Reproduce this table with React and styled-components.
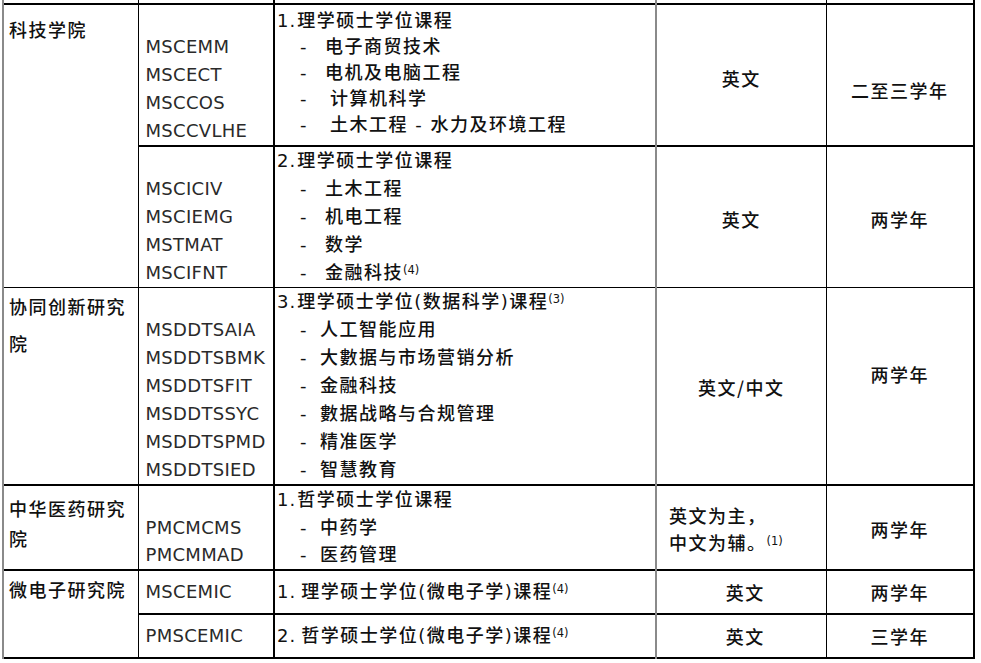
import React from "react";
import styled, { createGlobalStyle } from "styled-components";

const LATIN = `"DejaVu Sans", "Noto Sans CJK SC", sans-serif`;
const CJK = `"Noto Sans CJK SC", "Noto Sans CJK TC", sans-serif`;

const GlobalStyle = createGlobalStyle`
  html, body {
    margin: 0;
    padding: 0;
    background: #fff;
  }
  body {
    font-family: ${CJK};
    color: #111;
  }
`;

const App = () => {
  return (
    <Page>
      <GlobalStyle />
      <Table>
        <colgroup>
          <Col $w={135} />
          <Col $w={136} />
          <Col $w={382} />
          <Col $w={170} />
          <Col $w={148} />
        </colgroup>
        <tbody>
          <StubRow>
            <Stub $gray />
            <Stub />
            <Stub $thick />
            <Stub $gray />
            <Stub $right />
          </StubRow>

          <Row $top={2}>
            <School rowSpan={2} $pt={8} $lh={32}>
              科技学院
            </School>
            <Codes $lh={28}>
              <br />
              MSCEMM
              <br />
              MSCECT
              <br />
              MSCCOS
              <br />
              MSCCVLHE
            </Codes>
            <Course $pt={3} $lh={26}>
              <Title>
                <Num>1.</Num>理学硕士学位课程
              </Title>
              <Item>
                <Dash $w={25}>-</Dash>电子商贸技术
              </Item>
              <Item>
                <Dash $w={25}>-</Dash>电机及电脑工程
              </Item>
              <Item>
                <Dash $w={30}>-</Dash>计算机科学
              </Item>
              <Item>
                <Dash $w={30}>-</Dash>土木工程 - 水力及环境工程
              </Item>
            </Course>
            <Lang $pt={5}>英文</Lang>
            <Years $pt={30}>二至三学年</Years>
          </Row>

          <Row $top={2}>
            <Codes $lh={28}>
              <br />
              MSCICIV
              <br />
              MSCIEMG
              <br />
              MSTMAT
              <br />
              MSCIFNT
            </Codes>
            <Course $lh={28}>
              <Title>
                <Num>2.</Num>理学硕士学位课程
              </Title>
              <Item>
                <Dash $w={25}>-</Dash>土木工程
              </Item>
              <Item>
                <Dash $w={25}>-</Dash>机电工程
              </Item>
              <Item>
                <Dash $w={25}>-</Dash>数学
              </Item>
              <Item>
                <Dash $w={25}>-</Dash>金融科技<Sup>(4)</Sup>
              </Item>
            </Course>
            <Lang $pt={4}>英文</Lang>
            <Years $pt={4}>两学年</Years>
          </Row>

          <Row $top={1}>
            <School $pt={0} $lh={37}>
              协同创新研究院
            </School>
            <Codes $lh={28}>
              <br />
              MSDDTSAIA
              <br />
              MSDDTSBMK
              <br />
              MSDDTSFIT
              <br />
              MSDDTSSYC
              <br />
              MSDDTSPMD
              <br />
              MSDDTSIED
            </Codes>
            <Course $lh={28}>
              <Title>
                <Num>3.</Num>理学硕士学位(数据科学)课程<Sup>(3)</Sup>
              </Title>
              <Item>
                <Dash $w={20}>-</Dash>人工智能应用
              </Item>
              <Item>
                <Dash $w={20}>-</Dash>大數据与市场营销分析
              </Item>
              <Item>
                <Dash $w={20}>-</Dash>金融科技
              </Item>
              <Item>
                <Dash $w={20}>-</Dash>數据战略与合规管理
              </Item>
              <Item>
                <Dash $w={20}>-</Dash>精准医学
              </Item>
              <Item>
                <Dash $w={20}>-</Dash>智慧教育
              </Item>
            </Course>
            <Lang $pt={2}>英文/中文</Lang>
            <Years $pb={24}>两学年</Years>
          </Row>

          <Row $top={2}>
            <School $pt={7} $lh={30}>
              中华医药研究院
            </School>
            <Codes $lh={27.6}>
              <br />
              PMCMCMS
              <br />
              PMCMMAD
            </Codes>
            <Course $lh={27.6}>
              <Title>
                <Num>1.</Num>哲学硕士学位课程
              </Title>
              <Item>
                <Dash $w={20}>-</Dash>中药学
              </Item>
              <Item>
                <Dash $w={20}>-</Dash>医药管理
              </Item>
            </Course>
            <Note>
              英文为主，
              <br />
              中文为辅。<Sup>(1)</Sup>
            </Note>
            <Years $pt={3}>两学年</Years>
          </Row>

          <Row $top={2}>
            <School rowSpan={2} $pt={3} $lh={30}>
              微电子研究院
            </School>
            <Codes $pt={7} $pb={7}>
              MSCEMIC
            </Codes>
            <Course $pt={7} $pb={7}>
              <Title>
                <Num $gap={5}>1.</Num>理学硕士学位(微电子学)课程<Sup>(4)</Sup>
              </Title>
            </Course>
            <Lang $pl={8}>英文</Lang>
            <Years>两学年</Years>
          </Row>

          <Row $top={2}>
            <Codes $pt={7} $pb={7}>
              PMSCEMIC
            </Codes>
            <Course $pt={7} $pb={7}>
              <Title>
                <Num $gap={5}>2.</Num>哲学硕士学位(微电子学)课程<Sup>(4)</Sup>
              </Title>
            </Course>
            <Lang $pl={8}>英文</Lang>
            <Years>三学年</Years>
          </Row>
        </tbody>
      </Table>
    </Page>
  );
};

export default App;

const Page = styled.div`
  width: 981px;
  height: 663px;
  overflow: hidden;
  background: #fff;
  padding-left: 2px;
  box-sizing: border-box;
`;

const Table = styled.table`
  border-collapse: collapse;
  table-layout: fixed;
  width: 973px;
  border-bottom: 2px solid #000;
`;

const Col = styled.col`
  width: ${({ $w }) => $w}px;
`;

const StubRow = styled.tr`
  height: 3px;
`;

const Stub = styled.td`
  height: 3px;
  padding: 0;
  font-size: 0;
  line-height: 0;
  border-left: ${({ $gray, $thick }) =>
    $gray ? "2px solid #8a8a8a" : $thick ? "2px solid #000" : "1px solid #000"};
  border-right: ${({ $right }) => ($right ? "2px solid #000" : "none")};
`;

const Row = styled.tr`
  border-top: ${({ $top }) => $top}px solid #000;
`;

const Cell = styled.td`
  padding: 0;
  border: 1px solid #000;
  vertical-align: top;
  font-size: 18px;
  line-height: 28px;
  letter-spacing: 1.5px;
  color: #111;
  font-weight: 500;
`;

const School = styled(Cell)`
  border-left: 2px solid #8a8a8a;
  padding: ${({ $pt }) => $pt}px 4px 0 5px;
  line-height: ${({ $lh }) => $lh}px;
  font-family: ${CJK};
`;

const Codes = styled(Cell)`
  padding: ${({ $pt = 0 }) => $pt}px 0 ${({ $pb = 0 }) => $pb}px 7px;
  line-height: ${({ $lh = 28 }) => $lh}px;
  font-family: ${LATIN};
  font-weight: 400;
  letter-spacing: 0.3px;
  color: #2a2a2a;
  white-space: nowrap;
`;

const Course = styled(Cell)`
  border-left: 2px solid #000;
  padding: ${({ $pt = 0 }) => $pt}px 0 ${({ $pb = 0 }) => $pb}px 2px;
  line-height: ${({ $lh = 28 }) => $lh}px;
  font-family: ${LATIN};
  white-space: nowrap;
`;

const Title = styled.div`
  font-family: ${LATIN};
`;

const Num = styled.span`
  margin-right: ${({ $gap = 1 }) => $gap}px;
  letter-spacing: 1px;
  font-weight: 400;
`;

const Item = styled.div`
  padding-left: 23px;
`;

const Dash = styled.span`
  display: inline-block;
  width: ${({ $w }) => $w}px;
  font-family: ${LATIN};
  font-weight: 400;
`;

const Sup = styled.span`
  font-family: ${LATIN};
  font-weight: 400;
  font-size: 11.5px;
  letter-spacing: 0;
  line-height: 0;
  vertical-align: 5px;
`;

const Lang = styled(Cell)`
  border-left: 2px solid #8a8a8a;
  text-align: center;
  vertical-align: middle;
  padding: ${({ $pt = 0 }) => $pt}px 0 0 ${({ $pl = 0 }) => $pl}px;
  font-family: ${CJK};
`;

const Note = styled(Cell)`
  border-left: 2px solid #8a8a8a;
  vertical-align: middle;
  padding: 3px 0 0 12px;
  line-height: 27px;
  font-family: ${CJK};
`;

const Years = styled(Cell)`
  border-right: 2px solid #000;
  text-align: center;
  vertical-align: middle;
  padding: ${({ $pt = 0 }) => $pt}px 0 ${({ $pb = 0 }) => $pb}px 0;
  font-family: ${CJK};
`;
